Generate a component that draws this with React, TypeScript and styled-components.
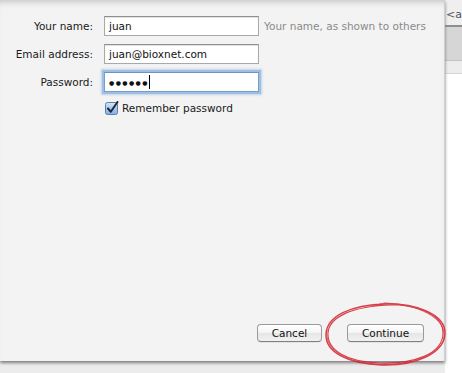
import React from "react";
import styled, { createGlobalStyle } from "styled-components";

const GlobalStyle = createGlobalStyle`
    html, body {
        margin: 0;
        padding: 0;
        background: #e4e4e4;
        font-family: "DejaVu Sans", "Liberation Sans", sans-serif;
    }
`;

/** Whole window, the sheet plus the bit of window behind it */
const Page = styled.div`
    display: flex;
    width: 462px;
    height: 373px;
    overflow: hidden;
    background: linear-gradient(#d9d9d9, #ececec 8px);
`;

/** The account setup sheet */
const Sheet = styled.div`
    position: relative;
    display: flex;
    flex-direction: column;
    justify-content: space-between;
    width: 445px;
    height: 361px;
    flex-shrink: 0;
    box-sizing: border-box;
    background: #f3f3f3;
    border-right: 1px solid #d0d0d0;
    box-shadow: inset 0 6px 6px -4px #c4c4c4, 0 2px 3px #7d7d7d;
    z-index: 1;
`;

/** Label / field grid */
const Form = styled.div`
    display: grid;
    grid-template-columns: 93px 155px auto;
    column-gap: 11px;
    row-gap: 8px;
    padding-top: 16px;
    align-items: center;
`;

const Label = styled.label`
    font-size: 10.5px;
    color: #1a1a1a;
    text-align: right;
`;

interface IFieldProps {
    focused?: boolean;
}

const Field = styled.div<IFieldProps>`
    display: flex;
    align-items: center;
    height: 20px;
    box-sizing: border-box;
    padding: 0 4px;
    background: #ffffff;
    border: 1px solid ${props => props.focused ? "#7b9ec4" : "#a9a9a9"};
    border-top-color: ${props => props.focused ? "#6f93bd" : "#8e8e8e"};
    box-shadow: ${props => props.focused ? "0 0 0 2px #9ebfe3, 0 0 2px 3px #bcd3ec" : "inset 0 1px 1px #e2e2e2"};
    font-size: 10.5px;
    color: #111;
    white-space: nowrap;
    overflow: hidden;
`;

const Dots = styled.span`
    font-size: 6px;
    letter-spacing: 1.4px;
`;

const Caret = styled.span`
    display: inline-block;
    width: 1px;
    height: 14px;
    background: #000;
`;

const Hint = styled.span`
    font-size: 10.5px;
    color: #8a8a8a;
    margin-left: -6px;
    white-space: nowrap;
`;

const CheckRow = styled.div`
    grid-column: 2 / 4;
    display: flex;
    align-items: center;
    gap: 3px;
    margin-top: 1px;
    padding-left: 1px;
    font-size: 10.5px;
    color: #1a1a1a;
`;

/** Bottom button bar */
const ButtonBar = styled.div`
    position: relative;
    display: flex;
    justify-content: flex-end;
    gap: 25px;
    padding: 0 20px 19px 0;
`;

interface IButtonProps {
    wide?: boolean;
}

const Button = styled.button<IButtonProps>`
    width: ${props => props.wide ? "77px" : "65px"};
    height: 18px;
    padding: 0;
    font-family: "DejaVu Sans", "Liberation Sans", sans-serif;
    font-size: 10.5px;
    color: #111;
    background: linear-gradient(#ffffff, #f4f4f4 50%, #e6e6e6 51%, #f1f1f1);
    border: 1px solid #9a9a9a;
    border-bottom-color: #7f7f7f;
    border-radius: 4px;
    box-shadow: 0 1px 0 rgba(0, 0, 0, 0.06);
`;

/** The red marker ring scribbled over the Continue button */
const Scribble = styled.svg`
    position: absolute;
    left: 322px;
    top: -24px;
    width: 126px;
    height: 68px;
    pointer-events: none;
`;

/** Piece of the window behind the sheet */
const Behind = styled.div`
    flex: 1;
    display: flex;
    flex-direction: column;
    background: #ffffff;
`;

const BehindTitle = styled.div`
    height: 27px;
    background: #efefef;
    border-bottom: 2px solid #8e8e8e;
    font-size: 11px;
    color: #555;
    padding: 8px 0 0 1px;
    box-sizing: border-box;
    white-space: nowrap;
    overflow: hidden;
`;

const BehindToolbar = styled.div`
    height: 33px;
    background: #d6d6d6;
    border-bottom: 1px solid #c3c3c3;
`;

const BehindStrip = styled.div`
    height: 12px;
    background: #ededed;
    border-bottom: 1px solid #d6d6d6;
`;

const CheckBox = () => (
    <svg width="14" height="14" viewBox="0 0 14 14">
        <defs>
            <linearGradient id="cb" x1="0" y1="0" x2="0" y2="1">
                <stop offset="0" stopColor="#d7e6f7" />
                <stop offset="0.5" stopColor="#a9c8ec" />
                <stop offset="1" stopColor="#7fb0e6" />
            </linearGradient>
        </defs>
        <rect x="0.5" y="1.5" width="12" height="12" rx="2" fill="url(#cb)" stroke="#5f7fa8" />
        <path d="M3 7.5 L5.8 10.8 L12.5 1" fill="none" stroke="#1c2a3c" strokeWidth="2" strokeLinecap="round" strokeLinejoin="round" />
    </svg>
);

export default function App() {
    return (
        <>
            <GlobalStyle />
            <Page>
                <Sheet>
                    <Form>
                        <Label>Your name:</Label>
                        <Field>juan</Field>
                        <Hint>Your name, as shown to others</Hint>

                        <Label>Email address:</Label>
                        <Field>juan@bioxnet.com</Field>
                        <span />

                        <Label>Password:</Label>
                        <Field focused>
                            <Dots>●●●●●●</Dots>
                            <Caret />
                        </Field>
                        <span />

                        <span />
                        <CheckRow>
                            <CheckBox />
                            Remember password
                        </CheckRow>
                    </Form>

                    <ButtonBar>
                        <Button>Cancel</Button>
                        <Button wide>Continue</Button>
                        <Scribble viewBox="0 0 126 68">
                            <g fill="none" stroke="#d3212e" strokeLinecap="round" opacity="0.85">
                                <path d="M58 4 C 92 2, 124 14, 123 34 C 122 54, 92 66, 60 65 C 26 64, 3 52, 4 34 C 5 16, 28 5, 64 4" strokeWidth="1.4" />
                                <path d="M50 6 C 88 1, 121 12, 121 33 C 121 55, 90 64, 58 63 C 24 62, 5 50, 6 33 C 7 17, 30 6, 70 5" strokeWidth="1.1" />
                                <path d="M62 3 C 96 4, 125 18, 122 38 C 119 56, 84 67, 52 64 C 20 61, 2 48, 5 30" strokeWidth="0.9" />
                            </g>
                        </Scribble>
                    </ButtonBar>
                </Sheet>
                <Behind>
                    <BehindTitle>&lt;a</BehindTitle>
                    <BehindToolbar />
                    <BehindStrip />
                </Behind>
            </Page>
        </>
    );
}
